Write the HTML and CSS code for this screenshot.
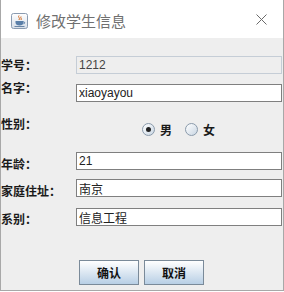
FILE: index.html
```html
<!DOCTYPE html>
<html lang="zh-CN">
<head>
<meta charset="UTF-8" />
<title>修改学生信息</title>
<link rel="stylesheet" href="styles.css">
</head>
<body>

<div class="window">
  <div class="titlebar">
    <svg class="app-icon" width="17" height="16" viewBox="0 0 17 16">
      <defs>
        <linearGradient id="ibg" x1="0" y1="0" x2="0" y2="1">
          <stop offset="0" stop-color="#ffffff" />
          <stop offset="1" stop-color="#d6dee8" />
        </linearGradient>
      </defs>
      <rect x="0.5" y="0.5" width="16" height="15" rx="2" fill="url(#ibg)" stroke="#8a9bb0" />
      <path d="M8 2.5 C6.5 4 9.5 5 8 7 M10 3.5 C9 4.5 11 5.5 10 7" stroke="#d2691e" stroke-width="1" fill="none" />
      <path d="M4.5 8 h8 v1.5 c0 2 -1.6 3 -4 3 s-4 -1 -4 -3 z" fill="#5a7fa8" />
      <path d="M12.5 8.8 c1.6 0 1.6 2 0 2" stroke="#5a7fa8" fill="none" />
      <rect x="3.5" y="13" width="10" height="1" fill="#6b86a6" />
    </svg>
    <span class="title">修改学生信息</span>
    <svg class="close" width="11" height="11" viewBox="0 0 11 11">
      <path d="M0.5 0.5 L10.5 10.5 M10.5 0.5 L0.5 10.5" stroke="#6a6a6a" stroke-width="1" />
    </svg>
  </div>

  <div class="content">
    <div class="row row-id">
      <span class="label">学号：</span>
      <input class="field" type="text" value="1212" disabled />
    </div>
    <div class="row row-name">
      <span class="label">名字：</span>
      <input class="field" type="text" value="xiaoyayou" />
    </div>
    <div class="row row-sex">
      <span class="label">性别：</span>
      <div class="radios">
        <span class="radio checked"></span><span class="radio-text">男</span>
        <span class="radio"></span><span class="radio-text">女</span>
      </div>
    </div>
    <div class="row row-age">
      <span class="label">年龄：</span>
      <input class="field" type="text" value="21" />
    </div>
    <div class="row row-home">
      <span class="label">家庭住址：</span>
      <input class="field" type="text" value="南京" />
    </div>
    <div class="row row-dept">
      <span class="label">系别：</span>
      <input class="field" type="text" value="信息工程" />
    </div>
    <div class="buttons">
      <button class="btn">确认</button>
      <button class="btn">取消</button>
    </div>
  </div>
</div>

</body>
</html>
```

FILE: styles.css
```css
body { margin: 0; background: #ffffff; font-family: "Liberation Sans", "Noto Sans CJK SC", sans-serif; }
.window {
  width: 284px; height: 291px; box-sizing: border-box;
  border: 1px solid #a8a8a8; border-top: none;
  display: flex; flex-direction: column; background: #eeeeee;
}
.titlebar {
  height: 38px; background: #ffffff; display: flex; align-items: center;
  padding: 3px 16px 0 10px; box-sizing: border-box;
}
.app-icon { flex: none; }
.title {
  margin-left: 8px; font-family: "Noto Sans CJK SC", sans-serif; font-size: 15px;
  color: #707070; flex: 1; letter-spacing: 0;
}
.close { flex: none; margin-top: -3px; }

.content { flex: 1; padding: 18px 1px 0 0; }
.row { display: flex; align-items: center; height: 18px; }
.label {
  width: 75px; flex: none; font-family: "Noto Sans CJK SC", sans-serif;
  font-weight: bold; font-size: 12px; line-height: 14px; color: #1a1a1a;
}
.field {
  flex: 1; min-width: 0; height: 18px; box-sizing: border-box; margin: 0;
  padding: 0 2px; border: 1px solid #7f7f7f; background: #ffffff;
  font-family: "Liberation Sans", "Noto Sans CJK SC", sans-serif; font-size: 12px; color: #222;
  outline: none;
}
.field:disabled { background: #eeeeee; border-color: #c5cdd6; color: #444; }

.row-name { margin-top: 10px; }
.row-name .label { margin-bottom: 10px; }
.row-sex { height: 50px; }
.row-sex .label { margin-bottom: 6px; }
.row-age .label { margin-top: 5px; }
.row-home { margin-top: 9px; }
.row-home .label { margin-top: 6px; }
.row-dept { margin-top: 11px; }
.row-dept .label { margin-top: 3px; }

.radios { display: flex; align-items: center; margin-left: 66px; margin-top: 4px; }
.radio {
  width: 13px; height: 13px; box-sizing: border-box; border-radius: 50%;
  border: 1px solid #8a9aab; background: linear-gradient(135deg, #ffffff, #c9d6e3);
  display: flex; align-items: center; justify-content: center;
}
.radio.checked::after { content: ""; width: 5px; height: 5px; border-radius: 50%; background: #222; }
.radio-text {
  margin: 0 13px 0 5px; font-family: "Noto Sans CJK SC", sans-serif;
  font-weight: bold; font-size: 12px; color: #1a1a1a;
}

.buttons { display: flex; gap: 5px; margin: 34px 0 0 78px; }
.btn {
  width: 60px; height: 25px; padding: 0; border: 1px solid #7a8a99;
  background: linear-gradient(#ffffff, #b8cfe5);
  font-family: "Noto Sans CJK SC", sans-serif; font-weight: bold; font-size: 12px; color: #111;
}
```
